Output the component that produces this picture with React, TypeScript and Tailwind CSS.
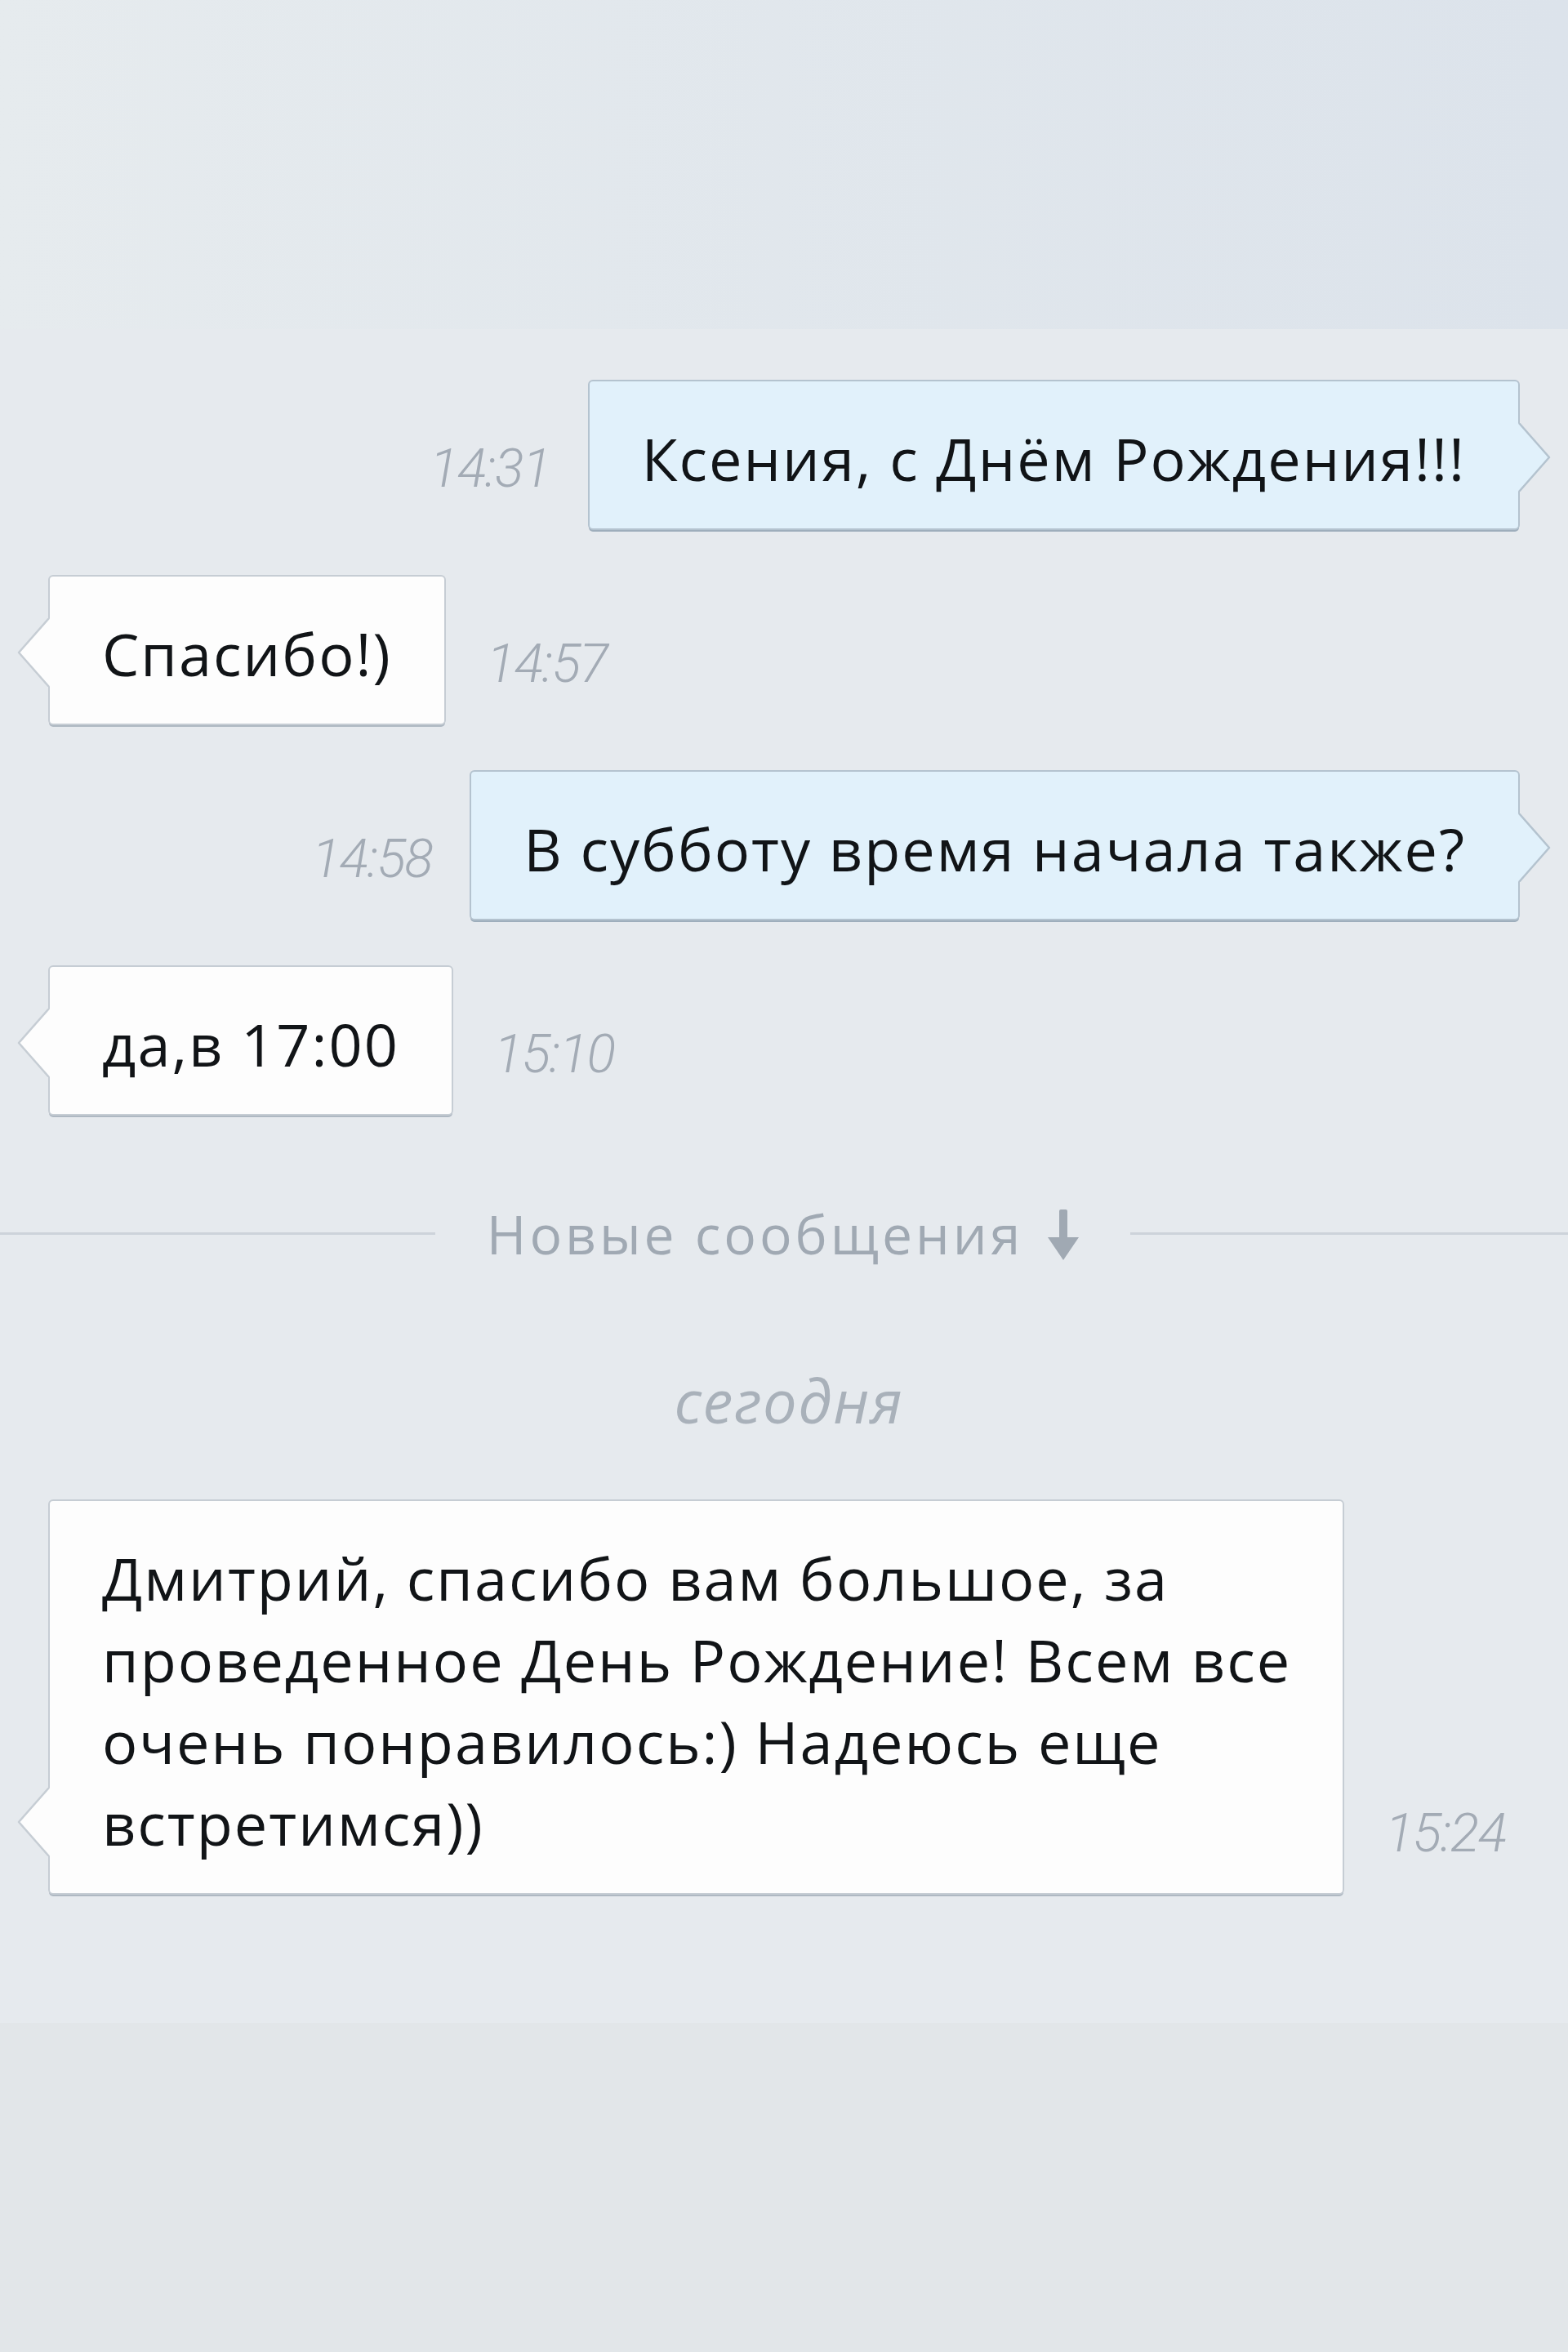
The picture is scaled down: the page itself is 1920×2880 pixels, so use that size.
import React from "react";

const textCls = "font-['Open_Sans','Noto_Sans',sans-serif] font-medium text-[72px] tracking-[0.028em] leading-[100px] text-[#111417] whitespace-nowrap";
const timeCls = "font-['Roboto',sans-serif] italic font-light text-[66px] leading-none tracking-tight text-[#a3abb5] mb-[42px] whitespace-nowrap";

function Tail({ out }: { out: boolean }) {
  const fill = out ? "#e1f1fb" : "#fdfdfd";
  const stroke = out ? "#b4c3cf" : "#c6cdd4";
  return (
    <svg
      className={out ? "absolute right-[-40px] bottom-[45px]" : "absolute left-[-40px] bottom-[45px]"}
      width="40"
      height="84"
      viewBox="0 0 40 84"
    >
      {out ? (
        <>
          <polygon points="0,0 38,42 0,84" fill={fill} />
          <polyline points="1,0 38,42 1,84" fill="none" stroke={stroke} strokeWidth="2.5" strokeLinejoin="round" />
        </>
      ) : (
        <>
          <polygon points="40,0 2,42 40,84" fill={fill} />
          <polyline points="39,0 2,42 39,84" fill="none" stroke={stroke} strokeWidth="2.5" strokeLinejoin="round" />
        </>
      )}
    </svg>
  );
}

function Bubble({ out, children, extra = "" }: { out: boolean; children: React.ReactNode; extra?: string }) {
  return (
    <div
      className={
        (out
          ? "relative rounded-[6px] border-2 border-[#b4c3cf] bg-[#e1f1fb] shadow-[0_3px_0_-1px_#9eaebc] "
          : "relative rounded-[6px] border-2 border-[#c6cdd4] bg-[#fdfdfd] shadow-[0_3px_0_-1px_#aeb8c2] ") +
        "pt-[44px] pb-[36px] pl-[64px] pr-[64px] " +
        extra
      }
    >
      <div className={textCls}>{children}</div>
      <Tail out={out} />
    </div>
  );
}

function OutRow({ time, text }: { time: string; text: string }) {
  return (
    <div className="flex items-end justify-end gap-[46px] pr-[59px]">
      <span className={timeCls}>{time}</span>
      <Bubble out>{text}</Bubble>
    </div>
  );
}

function InRow({ time, children, extra = "" }: { time: string; children: React.ReactNode; extra?: string }) {
  return (
    <div className="flex items-end justify-start gap-[50px] pl-[59px]">
      <Bubble out={false} extra={extra}>
        {children}
      </Bubble>
      <span className={timeCls}>{time}</span>
    </div>
  );
}

export default function App() {
  return (
    <div className="w-[1920px] h-[2880px] flex flex-col bg-[#e6eaee]">
      <div className="h-[403px] shrink-0 bg-gradient-to-r from-[#e6ebee] to-[#dce3eb]" />
      <div className="flex-1 flex flex-col bg-[#e6eaee] pt-[62px]">
        <div className="flex flex-col gap-[55px]">
          <OutRow time="14:31" text="Ксения, с Днём Рождения!!!" />
          <InRow time="14:57">Спасибо!)</InRow>
          <OutRow time="14:58" text="В субботу время начала также?" />
          <InRow time="15:10">да,в 17:00</InRow>
        </div>

        <div className="mt-[109px] flex items-center h-[70px]">
          <div className="w-[533px] h-[3px] bg-[#cdd3da]" />
          <div className="flex-1 flex items-center justify-center gap-[30px] font-['Open_Sans','Noto_Sans',sans-serif] font-medium text-[66px] leading-none tracking-[0.06em] text-[#a0a9b3] whitespace-nowrap">
            <span>Новые сообщения</span>
            <svg width="38" height="62" viewBox="0 0 38 62" className="mt-[4px]">
              <rect x="14" y="0" width="10" height="38" rx="2" fill="#a0a9b3" />
              <polygon points="0,34 38,34 19,62" fill="#a0a9b3" />
            </svg>
          </div>
          <div className="w-[536px] h-[3px] bg-[#cdd3da]" />
        </div>

        <div className="mt-[133px] flex justify-center">
          <span className="font-['Open_Sans','Noto_Sans',sans-serif] italic text-[74px] tracking-[0.02em] leading-none text-[#a9b1ba] pl-[12px]">
            сегодня
          </span>
        </div>

        <div className="mt-[84px]">
          <InRow time="15:24" extra="w-[1587px]">
            Дмитрий, спасибо вам большое, за
            <br />
            проведенное День Рождение! Всем все
            <br />
            очень понравилось:) Надеюсь еще
            <br />
            встретимся))
          </InRow>
        </div>
      </div>
      <div className="h-[403px] shrink-0 bg-[#e2e6e9]" />
    </div>
  );
}
